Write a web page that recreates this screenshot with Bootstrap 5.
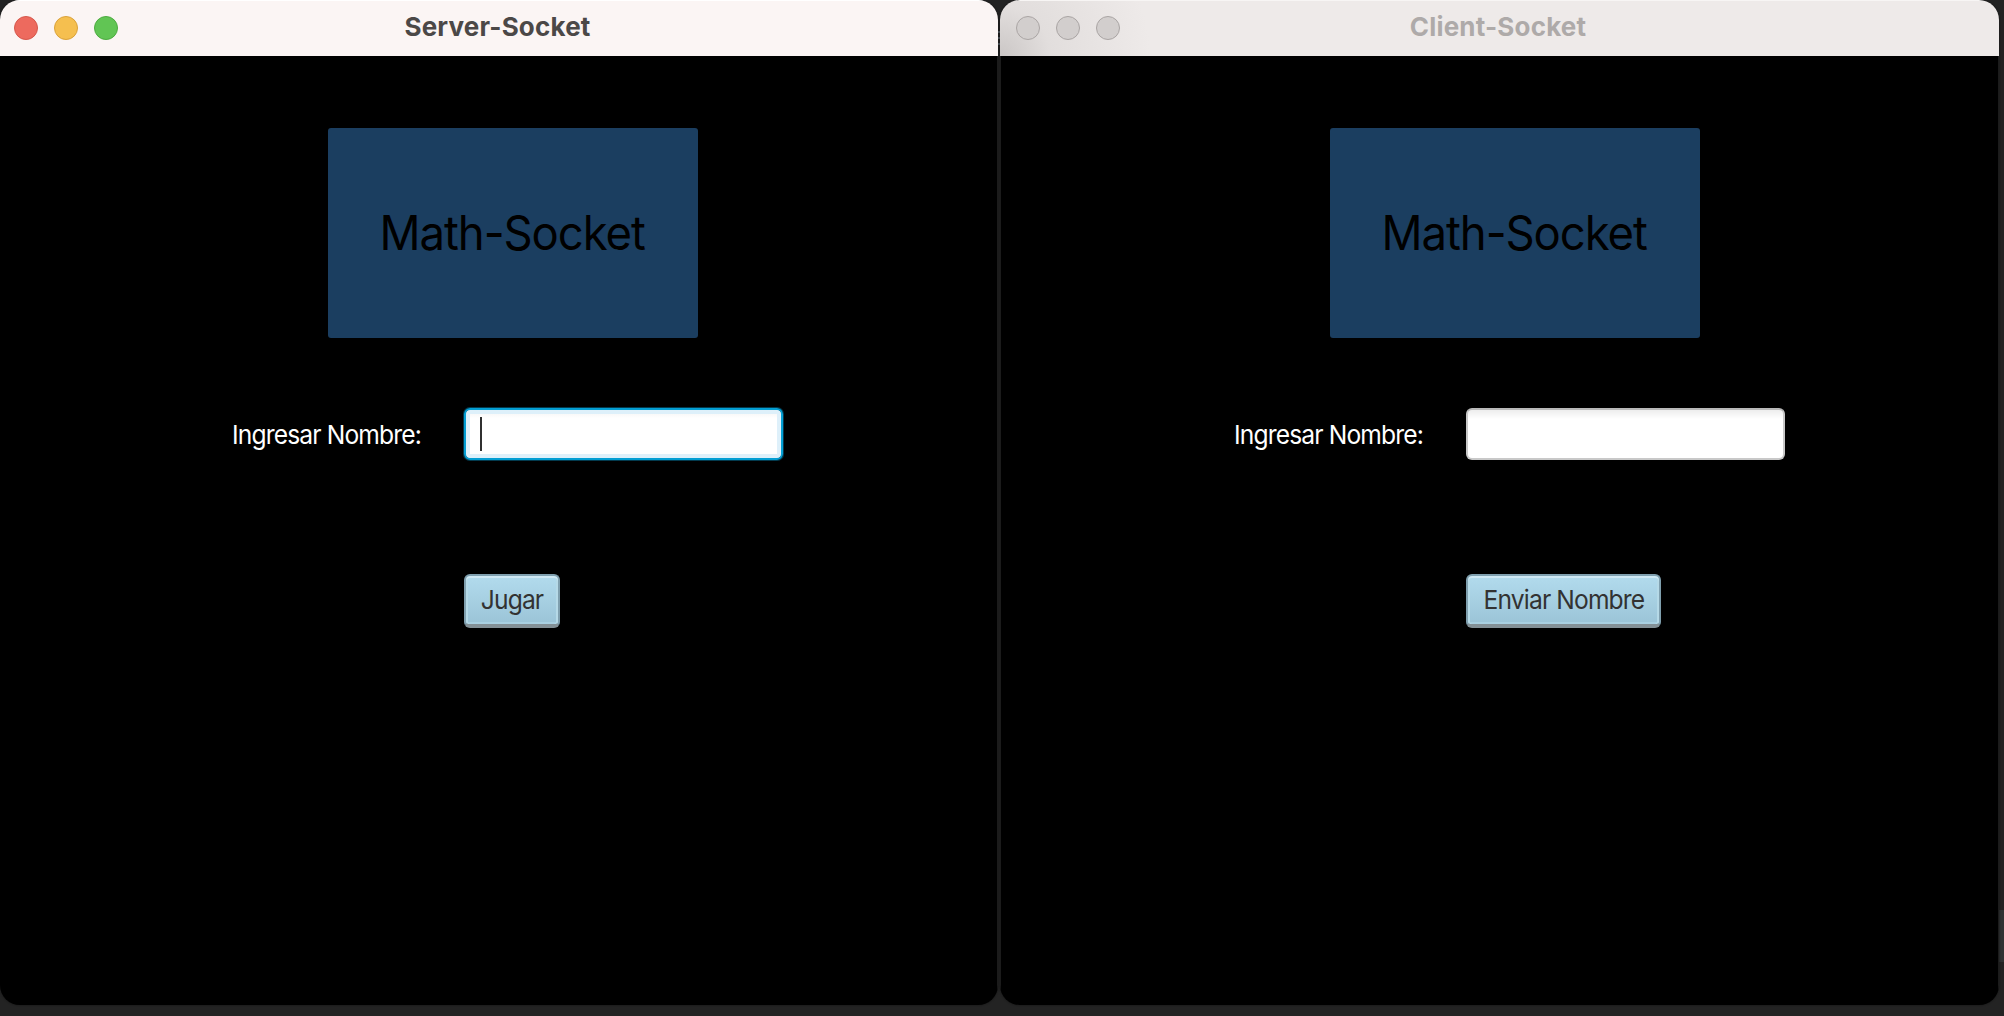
<!DOCTYPE html>
<html lang="es">
<head>
<meta charset="utf-8">
<title>Math-Socket</title>
<link href="https://cdn.jsdelivr.net/npm/bootstrap@5.3.0/dist/css/bootstrap.min.css" rel="stylesheet">
<style>
body{font-family:Inter,"Liberation Sans",sans-serif;background:#232323}
.desk{width:2004px;height:1016px;background:linear-gradient(#2f3233,#2f3233) 1999px 910px/5px 52px no-repeat,repeating-linear-gradient(#59626a 0 2px,#232323 2px 6px) 998px 31px/2px 15px no-repeat,#232323}
.app-window{height:1005px;border-radius:20px;background:#000;box-shadow:0 0 2px #111}
.win-server{width:998px}
.win-client{width:999px;margin-left:2px}
.titlebar{height:56px;padding:0 14px;background:#fbf5f4;border-top:1px solid #fff}
.win-client .titlebar{padding:0 16px;background:radial-gradient(circle at 0 100%,#cbc7c6 0,#e2dedd 50px,#eeeae9 150px);border-top-color:#f7f5f4}
.lights{gap:16px;width:104px;padding-bottom:1px}
.dot{width:24px;height:24px;border-radius:50%;border:1px solid #aaa5a4;background:#d2cecd}
.dot-close{background:#ed6a5e;border-color:#d5584c}
.dot-min{background:#f5bf4f;border-color:#d9a23b}
.dot-max{background:#61c554;border-color:#4dab40}
.title-text{font-size:26px;line-height:50px;font-weight:700;color:#4b4847;letter-spacing:.18px;height:54px;padding-right:3px}
.win-client .title-text{color:#aeaaa9}
.pane{height:949px;padding-top:72px;padding-left:234px;border-right:1px solid #1b1b1b}
.win-client .pane{padding-left:235px;border-left:1px solid #1b1b1b}
.banner{width:370px;height:210px;margin-left:94px;border-radius:3px;background:#1b3e60;color:#000;font-size:48px;letter-spacing:-1.1px}
.narrow{display:inline-block;transform:scaleX(.946)}
.banner .narrow{margin-left:-1px}
.entry{margin-top:70px;height:52px}
.entry-label{width:230px;color:#fff;font-size:26px;letter-spacing:-.9px;white-space:nowrap;text-indent:-1px}
.entry-label .narrow{transform-origin:left}
.entry-input.form-control{width:319px;height:52px;border:2px solid #c8c8c8;border-top-color:#b9b9b9;border-radius:6px;background:linear-gradient(#ededed,#fff 9px);padding:0 13px}
.entry-focus.form-control{border:2px solid #039ed3;background:linear-gradient(#f3f3f3,#fff 8px) padding-box;box-shadow:0 0 0 1px #023a4e,inset 0 0 0 4px #def0fa;padding:7px 14px 0}
.caret{width:2px;height:34px;background:#303030}
.action.btn{margin:114px 0 0 230px;height:54px;border:2px solid #7f9fae;border-bottom:4px solid #839096;border-radius:6px;background:linear-gradient(#b2dbed,#9bc4d7);box-shadow:inset 0 2px #cfe9f4,inset 2px 0 #b5d9e7,inset -2px 0 #b5d9e7,inset 0 -2px #a9d0e1;color:#323232;font-size:26px;line-height:46px;letter-spacing:-.9px;padding:0;text-align:center;white-space:nowrap}
.action-play{width:96px}
.action-send{width:195px}
</style>
<script src="https://cdn.jsdelivr.net/npm/bootstrap@5.3.0/dist/js/bootstrap.bundle.min.js"></script>
</head>
<body class="overflow-hidden">
<main class="desk d-flex align-items-start">
  <section class="app-window win-server overflow-hidden">
    <header class="titlebar d-flex align-items-center justify-content-between">
      <div class="lights d-flex"><span class="dot dot-close"></span><span class="dot dot-min"></span><span class="dot dot-max"></span></div>
      <div class="title-text">Server-Socket</div>
      <div class="lights"></div>
    </header>
    <div class="pane">
      <div class="banner d-flex align-items-center justify-content-center"><span class="narrow">Math-Socket</span></div>
      <div class="entry d-flex align-items-center">
        <label class="entry-label"><span class="narrow">Ingresar Nombre:</span></label>
        <div class="entry-input entry-focus form-control"><div class="caret"></div></div>
      </div>
      <button class="action action-play btn d-block"><span class="narrow">Jugar</span></button>
    </div>
  </section>
  <section class="app-window win-client overflow-hidden">
    <header class="titlebar d-flex align-items-center justify-content-between">
      <div class="lights d-flex"><span class="dot"></span><span class="dot"></span><span class="dot"></span></div>
      <div class="title-text">Client-Socket</div>
      <div class="lights"></div>
    </header>
    <div class="pane">
      <div class="banner d-flex align-items-center justify-content-center"><span class="narrow">Math-Socket</span></div>
      <div class="entry d-flex align-items-center">
        <label class="entry-label"><span class="narrow">Ingresar Nombre:</span></label>
        <div class="entry-input form-control"></div>
      </div>
      <button class="action action-send btn d-block"><span class="narrow">Enviar Nombre</span></button>
    </div>
  </section>
</main>
</body>
</html>
